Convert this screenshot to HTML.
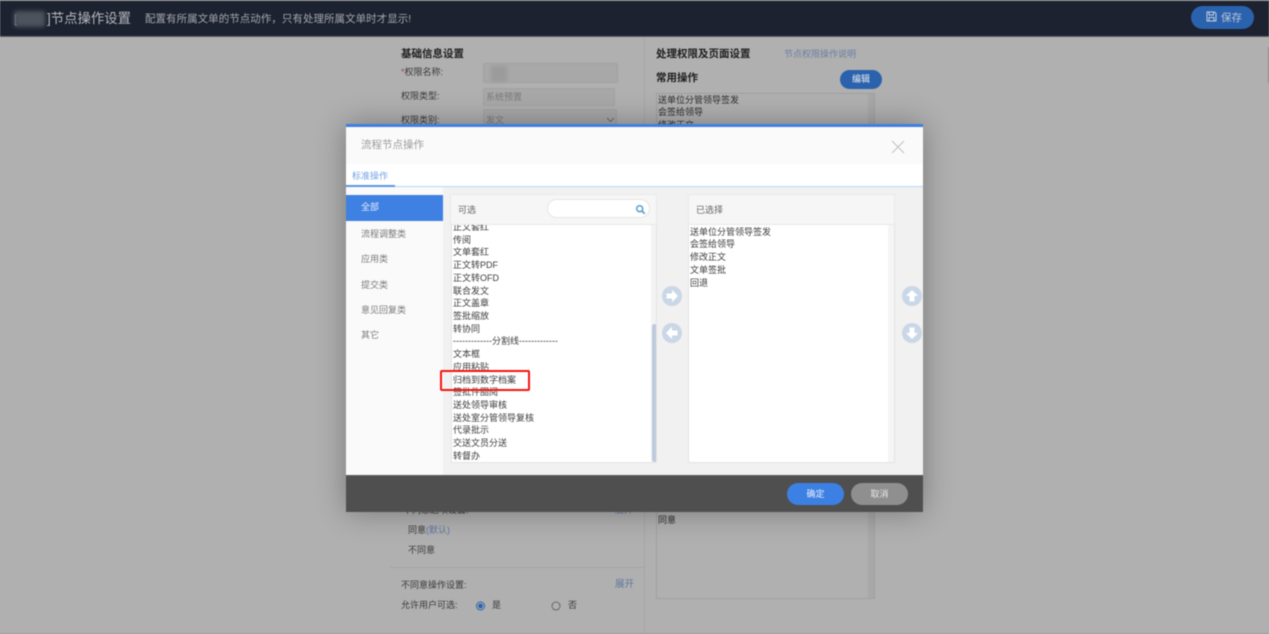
<!DOCTYPE html>
<html lang="zh"><head><meta charset="utf-8"><title>节点操作设置</title>
<style>
*{box-sizing:border-box}
html,body{margin:0;padding:0}
body{width:1269px;height:634px;overflow:hidden;position:relative;background:#b0b0b0;font-family:"Liberation Sans","Noto Sans CJK SC",sans-serif;font-size:9px;color:#333}
.a{position:absolute;white-space:nowrap}
#wrap{position:absolute;left:0;top:0;width:1269px;height:634px;filter:blur(.45px)}
.lab{color:#3a3a3a;font-size:9px;line-height:12px}
.inp{position:absolute;background:#a8a8a8;border:1px solid #a2a2a2;border-radius:2px;color:#7c7c7c;font-size:9px;line-height:17px;padding-left:2px}
.li{position:absolute;left:0;width:100%;font-size:9px;line-height:12.8px;height:12.8px;margin-top:.6px;color:#3c3c3c;white-space:nowrap}
.m{position:absolute;left:346px;width:97px;height:25.5px;line-height:26px;padding-left:15px;font-size:9px;color:#7a7a7a}
.circ{position:absolute;width:20px;height:20px}
.h{color:#1e1e1e;font-size:10.5px;line-height:14px;font-weight:bold}
</style></head><body><div id="wrap">

<!-- top bar -->
<div class="a" style="left:0;top:0;width:1269px;height:1px;background:#8b8b8b"></div>
<div class="a" style="left:0;top:1px;width:1269px;height:35px;background:#1c2230"></div>
<div class="a" style="left:0;top:36px;width:1269px;height:1px;background:#5f6065"></div>
<div class="a" style="left:14px;top:11px;color:#c5c6ca;font-size:12px;line-height:16px">[</div>
<div class="a" style="left:14px;top:11px;width:31px;height:16px;background:#4e525c;border-radius:2px;filter:blur(2px)"></div>
<div class="a" style="left:47px;top:10px;color:#b6b8bc;font-size:13.4px;line-height:18px">]节点操作设置</div>
<div class="a" style="left:145px;top:12px;color:#a5a7ac;font-size:10.5px;line-height:14px;letter-spacing:.03px">配置有所属文单的节点动作，只有处理所属文单时才显示!</div>
<div class="a" style="left:1191px;top:6px;width:63px;height:23px;border-radius:12px;background:#2b62ad"></div>
<svg class="a" style="left:1206px;top:11px" width="11" height="11" viewBox="0 0 11 11"><path d="M1 1H8.5L10 2.5V10H1Z M3 1V4H7.5V1 M3 10V6.5H8V10" fill="none" stroke="#c4cfde" stroke-width="1"/></svg>
<div class="a" style="left:1221px;top:11px;color:#bcc7d8;font-size:10.5px;line-height:14px">保存</div>

<!-- page background panels -->
<div class="a" style="left:644px;top:37px;width:1px;height:597px;background:#a6a6a6"></div>
<div class="a" style="left:1268px;top:47px;width:1px;height:36px;background:#8b8b8b"></div>
<div class="a h" style="left:401px;top:47px">基础信息设置</div>
<div class="a lab" style="left:401px;top:66px"><span style="color:#9a4a4a">*</span>权限名称:</div>
<div class="inp" style="left:483px;top:63px;width:135px;height:20px"></div>
<div class="a" style="left:491px;top:66px;width:16px;height:16px;background:#9b9b9b;filter:blur(1.5px)"></div>
<div class="a lab" style="left:401px;top:90px">权限类型:</div>
<div class="inp" style="left:483px;top:88px;width:132px;height:18px">系统预置</div>
<div class="a lab" style="left:401px;top:114px">权限类别:</div>
<div class="inp" style="left:483px;top:109px;width:134px;height:20px;line-height:20px">发文</div>
<svg class="a" style="left:606px;top:117px" width="9" height="6" viewBox="0 0 9 6"><path d="M1 1L4.5 4.5L8 1" fill="none" stroke="#6f6f6f"/></svg>

<div class="a h" style="left:656px;top:47px">处理权限及页面设置</div>
<div class="a" style="left:784px;top:48px;color:#6b7fa3;font-size:9px;line-height:13px">节点权限操作说明</div>
<div class="a h" style="left:656px;top:71px">常用操作</div>
<div class="a" style="left:840px;top:70px;width:42px;height:19px;border-radius:10px;background:#2b62ad;color:#b9c8de;font-size:9px;line-height:19px;text-align:center;font-weight:bold">编辑</div>
<div class="a" style="left:656px;top:93px;width:219px;height:40px;border:1px solid #a0a0a0;background:#b0b0b0"></div>
<div class="a" style="left:868px;top:94px;width:6px;height:38px;background:#a8a8a8"></div>
<div class="a" style="left:658px;top:94px;color:#2c2c2c;font-size:9px;line-height:12.3px">送单位分管领导签发<br>会签给领导<br>修改正文</div>

<!-- lower bg -->
<div class="a" style="left:403px;top:504px;color:#333;font-size:9px;line-height:12px">不同意选项设置:</div>
<div class="a" style="left:615px;top:504px;color:#5f779e;font-size:9px;line-height:12px">展开</div>
<div class="a lab" style="left:408px;top:524px">同意<span style="color:#5f779e">(默认)</span></div>
<div class="a lab" style="left:408px;top:544px">不同意</div>
<div class="a" style="left:390px;top:567px;width:254px;height:1px;background:#a4a4a4"></div>
<div class="a lab" style="left:401px;top:579px">不同意操作设置:</div>
<div class="a" style="left:615px;top:579px;color:#5f779e;font-size:9.5px;line-height:12px">展开</div>
<div class="a lab" style="left:401px;top:599px">允许用户可选:</div>
<svg class="a" style="left:475px;top:600px" width="12" height="12" viewBox="0 0 12 12"><circle cx="5.5" cy="6" r="4" fill="none" stroke="#2b62ad"/><circle cx="5.5" cy="6" r="2.4" fill="#2b62ad"/></svg>
<div class="a lab" style="left:492px;top:599px">是</div>
<svg class="a" style="left:550px;top:600px" width="12" height="12" viewBox="0 0 12 12"><circle cx="6" cy="6" r="4" fill="none" stroke="#5a5a5a" stroke-width=".8"/></svg>
<div class="a lab" style="left:568px;top:599px">否</div>
<div class="a" style="left:656px;top:500px;width:219px;height:99px;border:1px solid #a0a0a0;background:#b0b0b0"></div>
<div class="a" style="left:868px;top:501px;width:6px;height:97px;background:#a8a8a8"></div>
<div class="a" style="left:658px;top:514px;color:#2c2c2c;font-size:9px;line-height:12px">同意</div>
<div class="a" style="left:0;top:633px;width:1269px;height:1px;background:#a0a0a0"></div>

<!-- modal -->
<div class="a" style="left:346px;top:124px;width:577px;height:388px;background:#f1f1f1;box-shadow:0 0 28px rgba(0,0,0,.32);overflow:hidden"></div>
<div class="a" style="left:346px;top:124px;width:577px;height:3px;background:#3f7fe0"></div>
<div class="a" style="left:346px;top:127px;width:577px;height:37px;background:#fafafa"></div>
<div class="a" style="left:361px;top:138px;color:#9c9c9c;font-size:10.5px;line-height:14px">流程节点操作</div>
<svg class="a" style="left:891px;top:140px" width="14" height="14" viewBox="0 0 14 14"><path d="M1 1L13 13M13 1L1 13" stroke="#c2c2c2" stroke-width="1" fill="none"/></svg>
<div class="a" style="left:346px;top:164px;width:577px;height:22px;background:#fff"></div>
<div class="a" style="left:346px;top:186px;width:577px;height:1px;background:#b9d7f5"></div>
<div class="a" style="left:346px;top:185px;width:49px;height:1.5px;background:#5b95e6"></div>
<div class="a" style="left:352px;top:170px;color:#74a3e6;font-size:9px;line-height:12px">标准操作</div>

<div class="a" style="left:346px;top:187px;width:97px;height:288px;background:#fafafa"></div>
<div class="m" style="top:195px;background:#3f80e3;color:#e4eefb;line-height:25px">全部</div>
<div class="m" style="top:220.5px">流程调整类</div>
<div class="m" style="top:246px">应用类</div>
<div class="m" style="top:271.5px">提交类</div>
<div class="m" style="top:297px">意见回复类</div>
<div class="m" style="top:322px">其它</div>

<!-- available panel -->
<div class="a" style="left:450px;top:194px;width:207px;height:31px;background:#f5f6f5;border:1px solid #e9e9e9"></div>
<div class="a" style="left:458px;top:204px;color:#666;font-size:9px;line-height:12px">可选</div>
<div class="a" style="left:547px;top:199px;width:103px;height:19px;background:#fff;border:1px solid #e6e6e6;border-radius:10px"></div>
<svg class="a" style="left:635px;top:204px" width="11" height="11" viewBox="0 0 11 11"><circle cx="4.7" cy="4.7" r="3" fill="none" stroke="#5a9fc9" stroke-width="1.5"/><path d="M7 7L9.8 9.8" stroke="#5a9fc9" stroke-width="1.7"/></svg>
<div class="a" style="left:451px;top:225px;width:206px;height:238px;background:#fff;border:1px solid #e4e4e4;border-top:0;overflow:hidden">
  <div class="li" style="top:-4.6px;left:1px">正文套红</div>
  <div class="li" style="top:8.2px;left:1px">传阅</div>
  <div class="li" style="top:20.9px;left:1px">文单套红</div>
  <div class="li" style="top:33.6px;left:1px">正文转PDF</div>
  <div class="li" style="top:46.3px;left:1px">正文转OFD</div>
  <div class="li" style="top:59px;left:1px">联合发文</div>
  <div class="li" style="top:71.7px;left:1px">正文盖章</div>
  <div class="li" style="top:84.4px;left:1px">签批缩放</div>
  <div class="li" style="top:97.1px;left:1px">转协同</div>
  <div class="li" style="top:109.9px;left:1px">-------------分割线-------------</div>
  <div class="li" style="top:122.6px;left:1px">文本框</div>
  <div class="li" style="top:135.3px;left:1px">应用粘贴</div>
  <div class="li" style="top:148px;left:1px">归档到数字档案</div>
  <div class="li" style="top:160.7px;left:1px">签批件圈阅</div>
  <div class="li" style="top:173.4px;left:1px">送处领导审核</div>
  <div class="li" style="top:186.1px;left:1px">送处室分管领导复核</div>
  <div class="li" style="top:198.8px;left:1px">代录批示</div>
  <div class="li" style="top:211.5px;left:1px">交送文员分送</div>
  <div class="li" style="top:224.2px;left:1px">转督办</div>
  <div class="a" style="left:199px;top:0;width:6px;height:238px;background:#f3f3f3"></div>
  <div class="a" style="left:200px;top:99px;width:5px;height:138px;background:#bccadb;border-radius:3px"></div>
</div>
<!-- highlight -->
<div class="a" style="left:440px;top:370px;width:90px;height:21px;border:2px solid #f5150e;border-radius:2px"></div>

<!-- transfer buttons -->
<svg class="circ" style="left:662px;top:286px" viewBox="0 0 20 20"><circle cx="10" cy="10" r="10" fill="#c9d7e6"/><path d="M4.5 7.5H10V3.8L16 10L10 16.2V12.5H4.5Z" fill="#fff"/></svg>
<svg class="circ" style="left:662px;top:323px" viewBox="0 0 20 20"><circle cx="10" cy="10" r="10" fill="#c9d7e6"/><path d="M15.5 7.5H10V3.8L4 10L10 16.2V12.5H15.5Z" fill="#fff"/></svg>

<!-- selected panel -->
<div class="a" style="left:688px;top:194px;width:207px;height:31px;background:#f5f6f5;border:1px solid #e9e9e9"></div>
<div class="a" style="left:696px;top:204px;color:#666;font-size:9px;line-height:12px">已选择</div>
<div class="a" style="left:688px;top:225px;width:207px;height:238px;background:#fff;border:1px solid #e4e4e4;border-top:0;overflow:hidden">
  <div class="li" style="top:0;left:1px">送单位分管领导签发</div>
  <div class="li" style="top:12.7px;left:1px">会签给领导</div>
  <div class="li" style="top:25.4px;left:1px">修改正文</div>
  <div class="li" style="top:38.2px;left:1px">文单签批</div>
  <div class="li" style="top:51px;left:1px">回退</div>
  <div class="a" style="left:199px;top:0;width:6px;height:238px;background:#f5f5f5"></div>
</div>
<svg class="circ" style="left:902px;top:286px" viewBox="0 0 20 20"><circle cx="10" cy="10" r="10" fill="#c9d7e6"/><path d="M7.5 15.5V10H3.8L10 4L16.2 10H12.5V15.5Z" fill="#fff"/></svg>
<svg class="circ" style="left:902px;top:323px" viewBox="0 0 20 20"><circle cx="10" cy="10" r="10" fill="#c9d7e6"/><path d="M7.5 4.5V10H3.8L10 16L16.2 10H12.5V4.5Z" fill="#fff"/></svg>

<!-- footer -->
<div class="a" style="left:346px;top:475px;width:577px;height:37px;background:#4f4f4f;border-top:1px solid #5c5c5c"></div>
<div class="a" style="left:787px;top:483px;width:57px;height:22px;border-radius:11px;background:#3d80e4;color:#e8f0fb;font-size:9px;line-height:22px;text-align:center">确定</div>
<div class="a" style="left:851px;top:483px;width:57px;height:22px;border-radius:11px;background:#8f8f8f;color:#e6e6e6;font-size:9px;line-height:22px;text-align:center">取消</div>

</div></body></html>
